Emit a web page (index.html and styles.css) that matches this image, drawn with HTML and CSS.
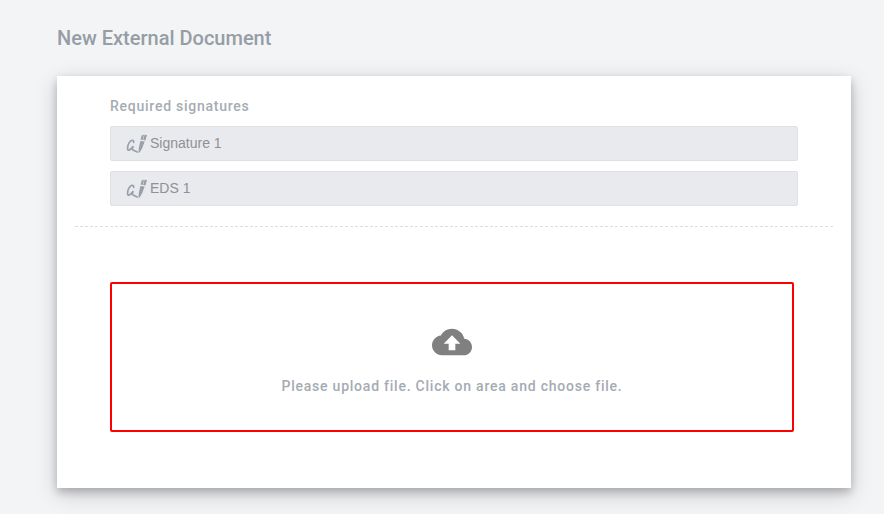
FILE: index.html
```html
<!DOCTYPE html>
<html lang="en">
<head>
<meta charset="utf-8">
<title>New External Document</title>
<link rel="stylesheet" href="styles.css">
</head>
<body>
<svg width="0" height="0" class="defs">
  <symbol id="sign" viewBox="0 0 22 20">
    <path d="M7.7 8.3C8 6.5 6.4 5.8 4.7 6.9C2.3 8.8 1.2 13.3 1.6 15.4C2.1 17.3 4.8 15.4 7 12.6C6.3 14.3 5.9 15.5 7 15.9L11.2 17.9" fill="none" stroke="currentColor" stroke-width="1.7" stroke-linecap="round" stroke-linejoin="round"/>
    <path d="M15.8 1.2L18 .7L16.7 5.9L14.5 5.6ZM18.5 .7L21 1.1L19.4 6.4L17.2 6ZM14.4 7L18.7 7.5L16 14.4L13.5 18.8L12.4 18.5L12.9 13.5Z" fill="currentColor"/>
  </symbol>
</svg>
<main class="page">
  <h1 class="title">New External Document</h1>
  <section class="card">
    <div class="signatures">
      <h2 class="label">Required signatures</h2>
      <div class="field"><svg class="sign"><use href="#sign"/></svg><span>Signature 1</span></div>
      <div class="field"><svg class="sign"><use href="#sign"/></svg><span>EDS 1</span></div>
    </div>
    <hr class="divider">
    <div class="upload">
      <svg class="cloud" viewBox="0 0 24 24"><path fill="currentColor" d="M19.35 10.04C18.67 6.59 15.64 4 12 4 9.11 4 6.6 5.64 5.35 8.04 2.34 8.36 0 10.91 0 14c0 3.31 2.69 6 6 6h13c2.76 0 5-2.24 5-5 0-2.64-2.05-4.78-4.65-4.96zM14 13v4h-4v-4H7l5-5 5 5h-3z"/></svg>
      <p class="hint">Please upload file. Click on area and choose file.</p>
    </div>
  </section>
</main>
</body>
</html>
```

FILE: styles.css
```css
* { box-sizing: border-box; }
body { margin: 0; height: 514px; overflow: hidden; background: #f3f4f6; font-family: Roboto, sans-serif; }
.defs { display: none; }
.page { padding: 26px 33px 0 57px; }
.title { margin: 0 0 26px; font-size: 20px; line-height: 24px; font-weight: 500; color: #969da5; }
.card { height: 412px; padding: 22px 18px 0; background: #fff; box-shadow: 0 4px 8px rgba(0, 0, 0, .2), 0 6px 20px rgba(0, 0, 0, .19); }
.signatures { padding: 0 35px; }
.label { margin: 0 0 12px; font-size: 14px; line-height: 16px; font-weight: 500; letter-spacing: .75px; color: #a5abb3; }
.field { display: flex; align-items: center; gap: 2px; height: 35px; margin-bottom: 10px; padding: 0 15px; border: 1px solid #dee0e4; border-radius: 2px; background: #e9eaee; color: #8e9195; font: 14px "Liberation Sans", Arial, sans-serif; }
.field span { padding-bottom: 2px; }
.sign { width: 22px; height: 20px; color: #9a9fa9; }
.divider { height: 0; margin: 20px 0 55px; border: 0; border-top: 1px dashed #dcdddf; }
.upload { display: flex; flex-direction: column; align-items: center; width: 684px; height: 150px; margin-left: 35px; padding-top: 38px; border: 2px solid #f00; border-radius: 2px; }
.cloud { width: 40px; height: 40px; color: #808080; }
.hint { margin: 16px 0 0; font-size: 14px; line-height: 16px; font-weight: 500; letter-spacing: .77px; color: #a5abb3; }
```
